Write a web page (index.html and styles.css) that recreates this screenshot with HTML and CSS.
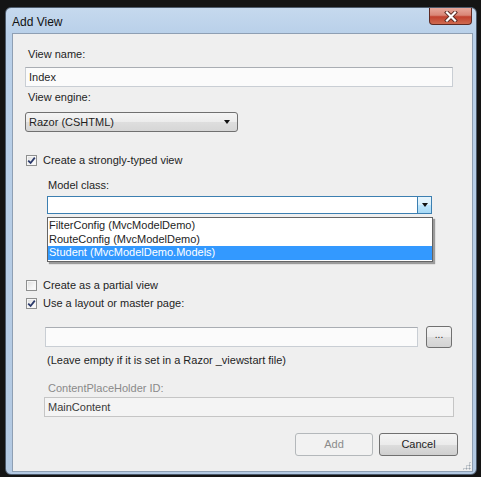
FILE: index.html
```html
<!DOCTYPE html>
<html lang="en">
<head>
    <meta charset="UTF-8">
    <title>Add View</title>
    <link rel="stylesheet" href="styles.css">
</head>
<body>
    <div class="window">
        <div class="titlebar">
            <span class="title">Add View</span>
            <div class="close-btn">
                <svg width="14" height="11" viewBox="0 0 14 11">
                    <path d="M3 1.5 L11 9.5 M11 1.5 L3 9.5" stroke="#5a2a22" stroke-width="4" stroke-linecap="square"/>
                    <path d="M3 1.5 L11 9.5 M11 1.5 L3 9.5" stroke="#ffffff" stroke-width="2.2" stroke-linecap="square"/>
                </svg>
            </div>
        </div>

        <div class="client">
            <div class="field-label">View name:</div>
            <div class="textbox name-box">Index</div>

            <div class="field-label engine-label">View engine:</div>
            <div class="select engine">
                <span>Razor (CSHTML)</span>
                <span class="arrow"></span>
            </div>

            <div class="check-row typed-row">
                <span class="checkbox checked">
                    <svg width="9" height="9" viewBox="0 0 9 9"><path d="M1.2 4.6 L3.6 7 L7.8 1.6" fill="none" stroke="#2b3a6b" stroke-width="1.8"/></svg>
                </span>
                Create a strongly-typed view
            </div>

            <div class="indent">
                <div class="field-label model-label">Model class:</div>
                <div class="combo">
                    <div class="combo-btn"><span class="arrow"></span></div>
                    <ul class="dropdown">
                        <li>FilterConfig (MvcModelDemo)</li>
                        <li>RouteConfig (MvcModelDemo)</li>
                        <li class="selected">Student (MvcModelDemo.Models)</li>
                    </ul>
                </div>
            </div>

            <div class="check-row partial-row">
                <span class="checkbox"></span>
                Create as a partial view
            </div>
            <div class="check-row layout-row">
                <span class="checkbox checked">
                    <svg width="9" height="9" viewBox="0 0 9 9"><path d="M1.2 4.6 L3.6 7 L7.8 1.6" fill="none" stroke="#2b3a6b" stroke-width="1.8"/></svg>
                </span>
                Use a layout or master page:
            </div>

            <div class="indent">
                <div class="layout-line">
                    <div class="textbox layout-box"></div>
                    <div class="browse-btn">...</div>
                </div>
                <div class="hint">(Leave empty if it is set in a Razor _viewstart file)</div>
                <div class="field-label disabled-label">ContentPlaceHolder ID:</div>
                <div class="textbox placeholder-box">MainContent</div>
            </div>

            <div class="button-row">
                <div class="btn btn-disabled">Add</div>
                <div class="btn">Cancel</div>
            </div>

            <div class="grip"></div>
        </div>
    </div>
</body>
</html>
```

FILE: styles.css
```css
* {
    box-sizing: border-box;
}

body {
    margin: 0;
    width: 481px;
    height: 477px;
    background-color: #141414;
    font-family: "Liberation Sans", Arial, sans-serif;
    font-size: 11px;
    color: #1e1e1e;
    overflow: hidden;
}

.window {
    margin: 7px 4px 0 5px;
    height: 468px;
    border: 1px solid #4d5b6c;
    border-radius: 6px;
    background: linear-gradient(to bottom, #c6d9ee 0px, #b9d0e9 26px, #b3c9e2 100%);
    padding: 0 3px 2px 6px;
    display: flex;
    flex-direction: column;
}

.titlebar {
    height: 25px;
    display: flex;
    justify-content: space-between;
    align-items: flex-start;
}

.title {
    margin-top: 7px;
    font-size: 12px;
    color: #111;
}

.close-btn {
    width: 43px;
    height: 17px;
    margin-right: 1px;
    border: 1px solid #5e2a23;
    border-top: none;
    border-radius: 0 0 4px 4px;
    background: linear-gradient(to bottom, #e8a89c 0%, #d98676 45%, #c1412e 55%, #cf6a4f 100%);
    display: flex;
    align-items: center;
    justify-content: center;
}

.client {
    position: relative;
    flex: 1;
    border: 1px solid #8e9fb3;
    background-color: #efefef;
    padding: 12px 14px 0 12px;
}

.field-label {
    height: 16px;
    line-height: 16px;
    padding-left: 3px;
}

.textbox {
    height: 20px;
    line-height: 18px;
    border: 1px solid #c9ced4;
    border-top-color: #a9adb3;
    background-color: #fbfbfb;
    padding-left: 3px;
}

.name-box {
    width: 428px;
    margin-top: 5px;
}

.engine-label {
    margin-top: 2px;
}

.select {
    height: 20px;
    margin-top: 7px;
    border: 1px solid #707070;
    border-radius: 3px;
    background: linear-gradient(to bottom, #f4f4f4 0%, #ececec 50%, #dedede 51%, #d6d6d6 100%);
    display: flex;
    align-items: center;
    justify-content: space-between;
    padding: 0 7px 0 3px;
}

.engine {
    width: 213px;
}

.arrow {
    width: 0;
    height: 0;
    border-left: 3.5px solid transparent;
    border-right: 3.5px solid transparent;
    border-top: 4px solid #111;
}

.check-row {
    height: 16px;
    display: flex;
    align-items: center;
    gap: 6px;
    padding-left: 1px;
}

.typed-row {
    margin-top: 20px;
}

.checkbox {
    width: 11px;
    height: 11px;
    border: 1px solid #8e8f8f;
    background: linear-gradient(135deg, #dcdcdc 0%, #f4f4f4 60%, #ffffff 100%);
    box-shadow: inset 0 0 0 1px #f6f6f6;
    display: flex;
    align-items: center;
    justify-content: center;
}

.indent {
    margin-left: 20px;
}

.model-label {
    margin-top: 9px;
}

.combo {
    position: relative;
    width: 385px;
    height: 18px;
    margin: 3px 0 0 2px;
    border: 1px solid #3c7fb1;
    background-color: #ffffff;
}

.combo-btn {
    position: absolute;
    right: 0;
    top: 0;
    width: 14px;
    height: 16px;
    border-left: 1px solid #3c7fb1;
    background: linear-gradient(to bottom, #e8f5fc 0%, #d9f0fc 50%, #bee6fd 51%, #a7d9f5 100%);
    display: flex;
    align-items: center;
    justify-content: center;
}

.dropdown {
    position: absolute;
    left: -1px;
    top: 20px;
    width: 386px;
    margin: 0;
    padding: 1px 0;
    list-style: none;
    background-color: #ffffff;
    border: 1px solid #646464;
    box-shadow: 2px 2px 1px rgba(0, 0, 0, 0.35);
}

.dropdown li {
    height: 13.6px;
    line-height: 13.6px;
    padding-left: 1px;
}

.dropdown li.selected {
    background-color: #3399ff;
    color: #ffffff;
}

.partial-row {
    margin-top: 63px;
}

.layout-row {
    margin-top: 2px;
}

.layout-line {
    display: flex;
    align-items: center;
    gap: 8px;
    margin-top: 15px;
}

.layout-box {
    width: 373px;
}

.browse-btn {
    width: 26px;
    height: 22px;
    border: 1px solid #707070;
    border-radius: 3px;
    background: linear-gradient(to bottom, #f4f4f4 0%, #ececec 50%, #dedede 51%, #d3d3d3 100%);
    text-align: center;
    line-height: 16px;
    font-size: 10px;
}

.hint {
    height: 16px;
    line-height: 16px;
    margin-top: 4px;
    padding-left: 2px;
}

.disabled-label {
    margin-top: 12px;
    color: #8a8a8a;
}

.placeholder-box {
    width: 410px;
    margin: 1px 0 0 -1px;
    background-color: #f4f4f4;
    border-color: #c5c5c5;
    color: #3a3a3a;
}

.button-row {
    display: flex;
    justify-content: flex-end;
    gap: 6px;
    margin-top: 16px;
}

.btn {
    width: 79px;
    height: 23px;
    border: 1px solid #707070;
    border-radius: 3px;
    background: linear-gradient(to bottom, #f4f4f4 0%, #ebebeb 50%, #dddddd 51%, #cfcfcf 100%);
    text-align: center;
    line-height: 21px;
}

.btn-disabled {
    width: 78px;
    border-color: #b4b8bb;
    background: #f2f2f2;
    color: #8b8b8b;
}

.grip {
    position: absolute;
    right: 1px;
    bottom: 1px;
    width: 9px;
    height: 9px;
    background:
        radial-gradient(circle, #9aa3ad 0.8px, transparent 1.2px) 0 0 / 3px 3px;
    clip-path: polygon(100% 0, 100% 100%, 0 100%);
}
```
